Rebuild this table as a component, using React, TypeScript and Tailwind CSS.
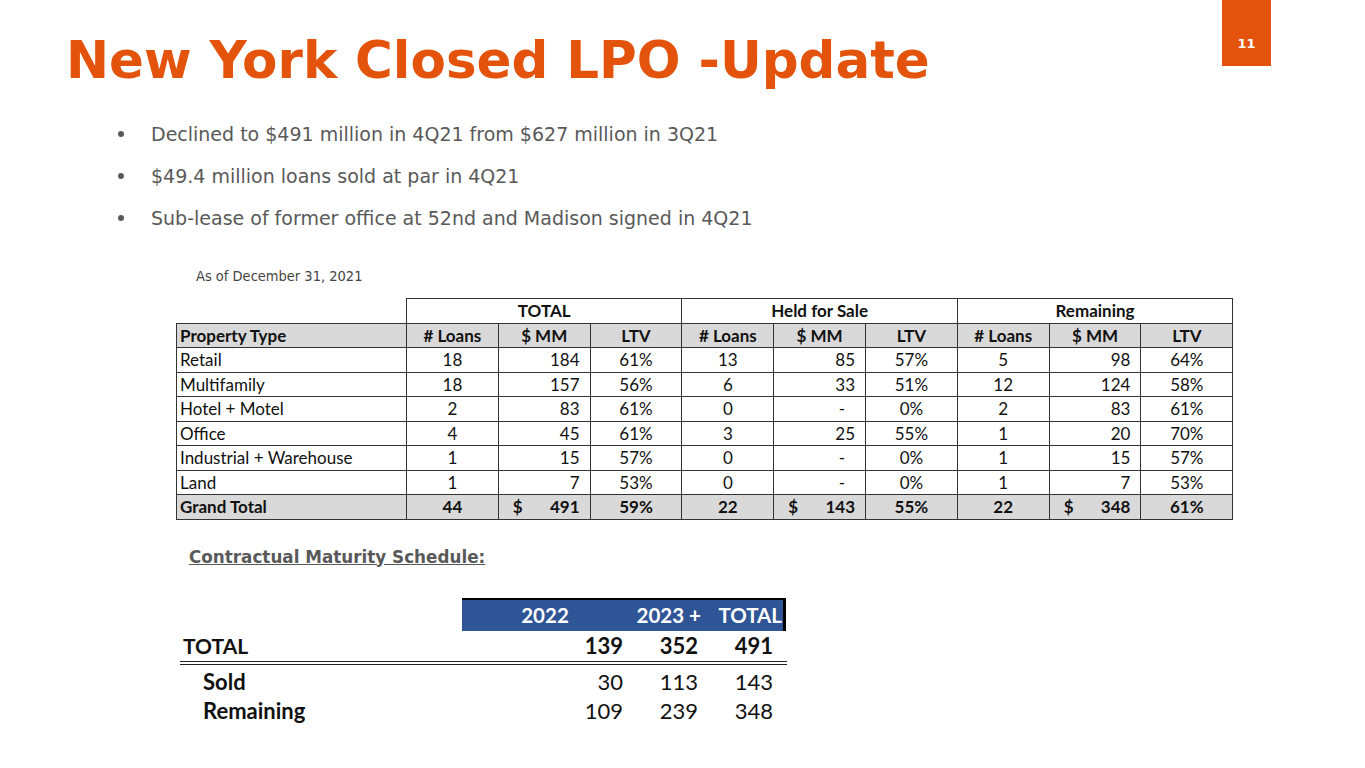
import React from "react";

const calibri = { fontFamily: "Lato, 'Open Sans', sans-serif" };

type Row = { name: string; v: (string | number)[] };

const rows: Row[] = [
  { name: "Retail", v: [18, 184, "61%", 13, 85, "57%", 5, 98, "64%"] },
  { name: "Multifamily", v: [18, 157, "56%", 6, 33, "51%", 12, 124, "58%"] },
  { name: "Hotel + Motel", v: [2, 83, "61%", 0, "-", "0%", 2, 83, "61%"] },
  { name: "Office", v: [4, 45, "61%", 3, 25, "55%", 1, 20, "70%"] },
  { name: "Industrial + Warehouse", v: [1, 15, "57%", 0, "-", "0%", 1, 15, "57%"] },
  { name: "Land", v: [1, 7, "53%", 0, "-", "0%", 1, 7, "53%"] },
];

const cell = "border border-[#333] px-[4px] h-[24.5px] leading-none";

function MainTable() {
  return (
    <table
      className="ml-[176px] w-[1056px] border-collapse table-fixed text-[17px] text-[#111]"
      style={calibri}
    >
      <colgroup>
        <col className="w-[230px]" />
        {Array.from({ length: 9 }).map((_, i) => (
          <col key={i} className="w-[91.8px]" />
        ))}
      </colgroup>
      <tbody>
        <tr>
          <td className="h-[24px]"></td>
          <td colSpan={3} className={cell + " text-center font-bold"}>TOTAL</td>
          <td colSpan={3} className={cell + " text-center font-bold"}>Held for Sale</td>
          <td colSpan={3} className={cell + " text-center font-bold"}>Remaining</td>
        </tr>
        <tr className="bg-[#d9d9d9] font-bold">
          <td className={cell + " text-left pl-[3px]"}>Property Type</td>
          {["# Loans", "$ MM", "LTV", "# Loans", "$ MM", "LTV", "# Loans", "$ MM", "LTV"].map((h, i) => (
            <td key={i} className={cell + " text-center"}>{h}</td>
          ))}
        </tr>
        {rows.map((r) => (
          <tr key={r.name}>
            <td className={cell + " text-left pl-[3px]"}>{r.name}</td>
            {r.v.map((x, i) => (
              <td
                key={i}
                className={cell + (i % 3 === 1 ? (x === "-" ? " text-right pr-[20px]" : " text-right pr-[10px]") : " text-center")}
              >
                {x}
              </td>
            ))}
          </tr>
        ))}
        <tr className="bg-[#d9d9d9] font-bold">
          <td className={cell + " text-left pl-[3px]"}>Grand Total</td>
          {[
            ["44", "491", "59%"],
            ["22", "143", "55%"],
            ["22", "348", "61%"],
          ].map((g, gi) => (
            <React.Fragment key={gi}>
              <td className={cell + " text-center"}>{g[0]}</td>
              <td className={cell + " pr-[10px]"}>
                <div className="flex justify-between pl-[10px]">
                  <span>$</span>
                  <span>{g[1]}</span>
                </div>
              </td>
              <td className={cell + " text-center"}>{g[2]}</td>
            </React.Fragment>
          ))}
        </tr>
      </tbody>
    </table>
  );
}

function MaturityTable() {
  const col1 = "w-[168px] text-right pr-[7px]";
  const col2 = "w-[75px] text-right pr-[7px]";
  const col3 = "w-[81px] text-right pr-[13px]";
  return (
    <div className="ml-[180px] w-[607px] text-[22px] text-[#111]" style={calibri}>
      <div className="flex h-[33px]">
        <div className="w-[282px]"></div>
        <div className="flex bg-[#2f5597] text-white font-bold border-t-2 border-r-[3px] border-black items-center leading-none text-[20.5px]">
          <div className="w-[168px] text-center pr-[2px]">2022</div>
          <div className="w-[75px] text-right pr-[4px] whitespace-nowrap">2023 +</div>
          <div className="w-[78px] text-right pr-[1px]">TOTAL</div>
        </div>
      </div>
      <div className="flex h-[30px] items-center font-bold leading-none">
        <div className="w-[282px] pl-[3px] text-[21px]">TOTAL</div>
        <div className={col1}>139</div>
        <div className={col2}>352</div>
        <div className={col3}>491</div>
      </div>
      <div className="border-t border-b border-[#222] h-[4px]"></div>
      <div className="flex h-[31px] items-center leading-none pt-[3px]">
        <div className="w-[282px] pl-[23px] font-bold">Sold</div>
        <div className={col1}>30</div>
        <div className={col2}>113</div>
        <div className={col3}>143</div>
      </div>
      <div className="flex h-[31px] items-center leading-none">
        <div className="w-[282px] pl-[23px] font-bold">Remaining</div>
        <div className={col1}>109</div>
        <div className={col2}>239</div>
        <div className={col3}>348</div>
      </div>
    </div>
  );
}

export default function App() {
  return (
    <div
      className="w-[1365px] h-[768px] bg-white overflow-hidden flex flex-col"
      style={{ fontFamily: "'DejaVu Sans', Verdana, sans-serif" }}
    >
      <div className="flex items-start justify-between">
        <h1 className="ml-[66px] mt-[30px] text-[51.5px] leading-[60px] font-bold text-[#e3530b] whitespace-nowrap">
          New York Closed LPO -Update
        </h1>
        <div className="mr-[94px] w-[49px] h-[66px] bg-[#e3530b] flex items-end justify-center pb-[16px]">
          <span className="text-white text-[13px] font-bold leading-none">11</span>
        </div>
      </div>

      <ul className="mt-[33px] ml-[118px] text-[19px] text-[#595959] flex flex-col gap-[20px]">
        {[
          "Declined to $491 million in 4Q21 from $627 million in 3Q21",
          "$49.4 million loans sold at par in 4Q21",
          "Sub-lease of former office at 52nd and Madison signed in 4Q21",
        ].map((t) => (
          <li key={t} className="flex items-center leading-[22px]">
            <span className="w-[33px] flex">
              <span className="w-[6px] h-[6px] rounded-full bg-[#595959]"></span>
            </span>
            <span>{t}</span>
          </li>
        ))}
      </ul>

      <div
        className="ml-[196px] mt-[39px] text-[14.5px] text-[#444] leading-[16px]"
        style={{ fontFamily: "'DejaVu Sans Condensed', 'DejaVu Sans', sans-serif" }}
      >
        As of December 31, 2021
      </div>

      <div className="mt-[14px]">
        <MainTable />
      </div>

      <div className="ml-[189px] mt-[28px] text-[16.8px] font-bold text-[#595959] underline leading-[18px]">
        Contractual Maturity Schedule:
      </div>

      <div className="mt-[32px]">
        <MaturityTable />
      </div>
    </div>
  );
}
